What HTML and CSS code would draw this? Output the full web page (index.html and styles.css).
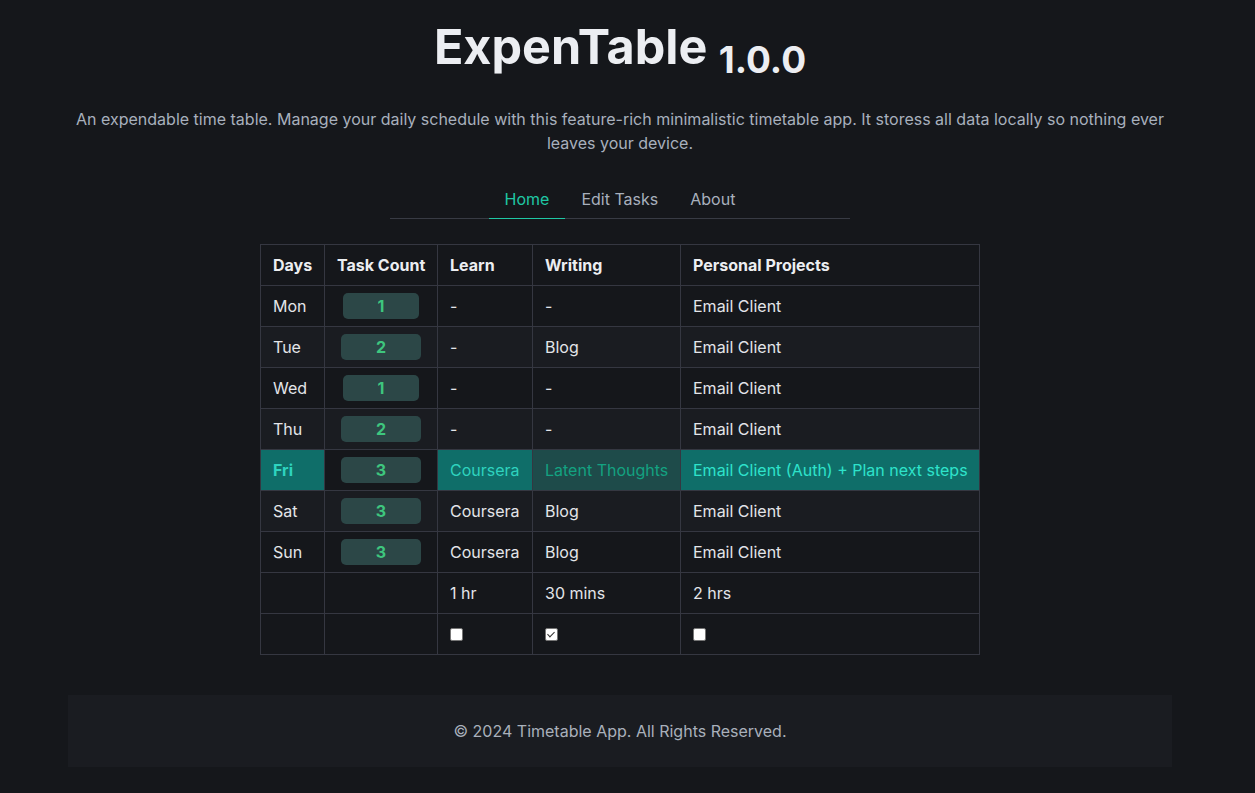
FILE: index.html
```html
<!DOCTYPE html>
<html lang="en">
<head>
<meta charset="utf-8">
<title>ExpenTable</title>
<link rel="stylesheet" href="styles.css">
</head>
<body>
<div class="page">
  <header class="hero">
    <h1 class="title">ExpenTable <small class="version">1.0.0</small></h1>
    <p class="lead">An expendable time table. Manage your daily schedule with this feature-rich minimalistic timetable app. It storess all data locally so nothing ever leaves your device.</p>
  </header>
  <nav class="tabs">
    <div class="tab-list">
      <a class="tab active">Home</a>
      <a class="tab">Edit Tasks</a>
      <a class="tab">About</a>
    </div>
  </nav>
  <main class="main">
    <table class="grid">
      <colgroup>
        <col class="c-day"><col class="c-count"><col class="c-learn"><col class="c-writing"><col class="c-proj">
      </colgroup>
      <thead>
        <tr><th>Days</th><th class="center">Task Count</th><th>Learn</th><th>Writing</th><th>Personal Projects</th></tr>
      </thead>
      <tbody>
        <tr><td>Mon</td><td class="center"><span class="badge">1</span></td><td>-</td><td>-</td><td>Email Client</td></tr>
        <tr class="stripe"><td>Tue</td><td class="center"><span class="badge">2</span></td><td>-</td><td>Blog</td><td>Email Client</td></tr>
        <tr><td>Wed</td><td class="center"><span class="badge">1</span></td><td>-</td><td>-</td><td>Email Client</td></tr>
        <tr class="stripe"><td>Thu</td><td class="center"><span class="badge">2</span></td><td>-</td><td>-</td><td>Email Client</td></tr>
        <tr class="today"><td class="hl day">Fri</td><td class="center plain"><span class="badge">3</span></td><td class="hl">Coursera</td><td class="done">Latent Thoughts</td><td class="hl bright">Email Client (Auth) + Plan next steps</td></tr>
        <tr class="stripe"><td>Sat</td><td class="center"><span class="badge">3</span></td><td>Coursera</td><td>Blog</td><td>Email Client</td></tr>
        <tr><td>Sun</td><td class="center"><span class="badge">3</span></td><td>Coursera</td><td>Blog</td><td>Email Client</td></tr>
      </tbody>
      <tfoot>
        <tr><td></td><td></td><td>1 hr</td><td>30 mins</td><td>2 hrs</td></tr>
        <tr><td></td><td></td>
          <td><input type="checkbox" class="check"></td>
          <td><input type="checkbox" class="check" checked></td>
          <td><input type="checkbox" class="check"></td>
        </tr>
      </tfoot>
    </table>
  </main>
  <footer class="footer">© 2024 Timetable App. All Rights Reserved.</footer>
</div>
</body>
</html>
```
FILE: styles.css
```css
html, body {
  margin: 0;
  padding: 0;
  background: #15171b;
}
body {
  font-family: Inter, "Noto Sans", sans-serif;
  color: #e3e5e9;
  font-size: 16px;
  line-height: 24px;
}
.page {
  width: 1240px;
  display: flex;
  flex-direction: column;
  align-items: center;
}
.hero {
  width: 1104px;
  text-align: center;
}
.title {
  margin: 18px 0 0;
  font-size: 48.5px;
  line-height: 58px;
  font-weight: 700;
  color: #eceef2;
}
.version {
  font-size: 37px;
  font-weight: 700;
  vertical-align: -9px;
}
.lead {
  margin: 18px 0 0;
  color: #a8b0bd;
  font-size: 16px;
  line-height: 24px;
}
.tabs {
  margin-top: 24px;
  width: 460px;
  border-bottom: 1px solid #383b44;
  display: flex;
  justify-content: center;
}
.tab-list {
  display: flex;
}
.tab {
  padding: 8px 16px 7px;
  margin-bottom: -1px;
  border-bottom: 1px solid transparent;
  color: #a8b0bd;
  font-size: 16px;
  line-height: 24px;
  cursor: pointer;
}
.tab.active {
  color: #1fc7a4;
  border-bottom-color: #1fc7a4;
}
.main {
  margin-top: 25px;
}
.grid {
  width: 719px;
  border-collapse: collapse;
  table-layout: fixed;
  border: 1px solid #353741;
}
.c-day { width: 64px; }
.c-count { width: 113px; }
.c-learn { width: 95px; }
.c-writing { width: 148px; }
.c-proj { width: 299px; }
.grid th, .grid td {
  border: 1px solid #353741;
  padding: 8px 12px;
  height: 24px;
  line-height: 24px;
  text-align: left;
  white-space: nowrap;
  font-size: 16px;
}
.grid th {
  color: #eceef1;
  font-weight: 700;
}
.grid td {
  color: #e3e5e9;
}
.grid .center {
  text-align: center;
}
.stripe td {
  background: #1a1c21;
}
.badge {
  display: inline-block;
  height: 26px;
  line-height: 26px;
  margin: -1px 0;
  padding: 0 35px;
  border-radius: 5px;
  background: #2c4747;
  color: #3ec67e;
  font-weight: 700;
  vertical-align: top;
}
.today td.hl {
  background: #0f6e69;
  color: #2ed3bf;
}
.today td.day {
  font-weight: 700;
}
.today td.bright {
  color: #2ee3cb;
}
.today td.done {
  background: #1e4b4a;
  color: #13a281;
}
.check {
  -webkit-appearance: none;
  appearance: none;
  margin: 0;
  width: 13px;
  height: 13px;
  box-sizing: border-box;
  border: 1px solid #767676;
  border-radius: 2px;
  background: #ffffff;
  vertical-align: -1px;
  position: relative;
}
.check:checked::after {
  content: "";
  position: absolute;
  left: 3px;
  top: 1px;
  width: 3px;
  height: 6px;
  border-right: 1.5px solid #333;
  border-bottom: 1.5px solid #333;
  transform: rotate(45deg);
}
.footer {
  margin-top: 40px;
  margin-bottom: 26px;
  width: 1104px;
  height: 72px;
  line-height: 72px;
  background: #1a1c21;
  color: #a9b0bb;
  text-align: center;
  font-size: 16px;
}
```
